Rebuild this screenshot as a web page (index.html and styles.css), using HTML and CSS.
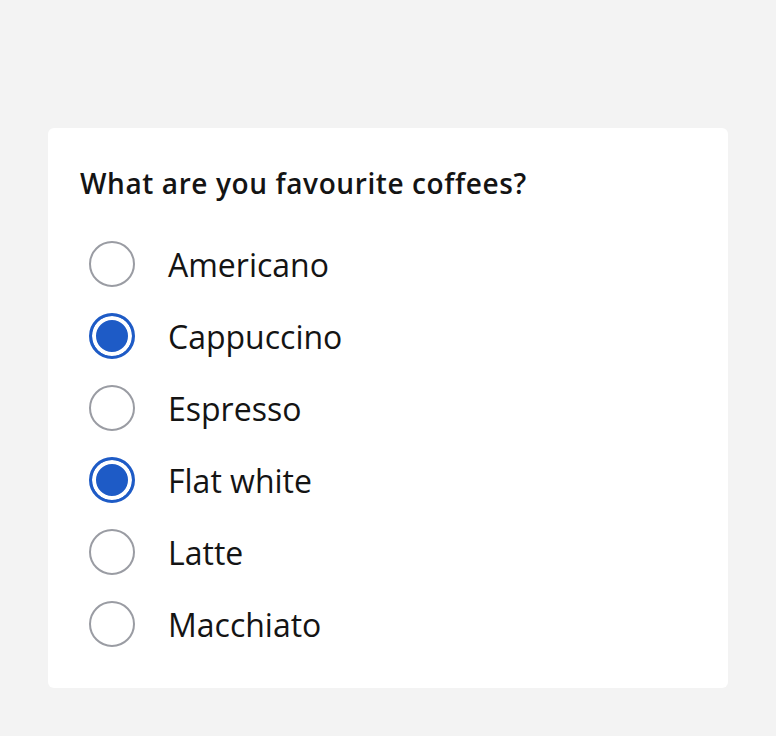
FILE: index.html
```html
<!DOCTYPE html>
<html>
<head>
<link rel="stylesheet" href="styles.css">
</head>
<body>
  <div class="card">
    <fieldset class="group">
      <legend class="title">What are you favourite coffees?</legend>
      <label class="option"><input type="checkbox" class="radio"><span>Americano</span></label>
      <label class="option"><input type="checkbox" class="radio" checked><span>Cappuccino</span></label>
      <label class="option"><input type="checkbox" class="radio"><span>Espresso</span></label>
      <label class="option"><input type="checkbox" class="radio" checked><span>Flat white</span></label>
      <label class="option"><input type="checkbox" class="radio"><span>Latte</span></label>
      <label class="option"><input type="checkbox" class="radio"><span>Macchiato</span></label>
    </fieldset>
  </div>
</body>
</html>
```
FILE: styles.css
```css
html, body {
  margin: 0;
  padding: 0;
  background-color: #f3f3f3;
}

body {
  padding: 128px 48px 48px 48px;
  font-family: "Open Sans", "Noto Sans", sans-serif;
  color: #141414;
}

.card {
  background-color: #fff;
  border-radius: 6px;
  padding: 37px 32px 28px 32px;
  height: 495px;
}

.group {
  border: 0;
  margin: 0;
  padding: 0;
}

.title {
  padding: 0;
  font-size: 28px;
  font-weight: 600;
  line-height: 36px;
  letter-spacing: 0.6px;
  margin-bottom: 27px;
}

.option {
  display: flex;
  align-items: center;
  height: 72px;
  font-size: 32px;
  cursor: pointer;
}

.radio {
  appearance: none;
  -webkit-appearance: none;
  box-sizing: border-box;
  width: 46px;
  height: 46px;
  margin: 0 33px 0 9px;
  border: 2px solid #9a9ca3;
  border-radius: 50%;
  background-color: #fff;
  flex-shrink: 0;
}

.radio:checked {
  border: 3px solid #1e5bc6;
  background-color: #1e5bc6;
  box-shadow: inset 0 0 0 4px #fff;
}
```
